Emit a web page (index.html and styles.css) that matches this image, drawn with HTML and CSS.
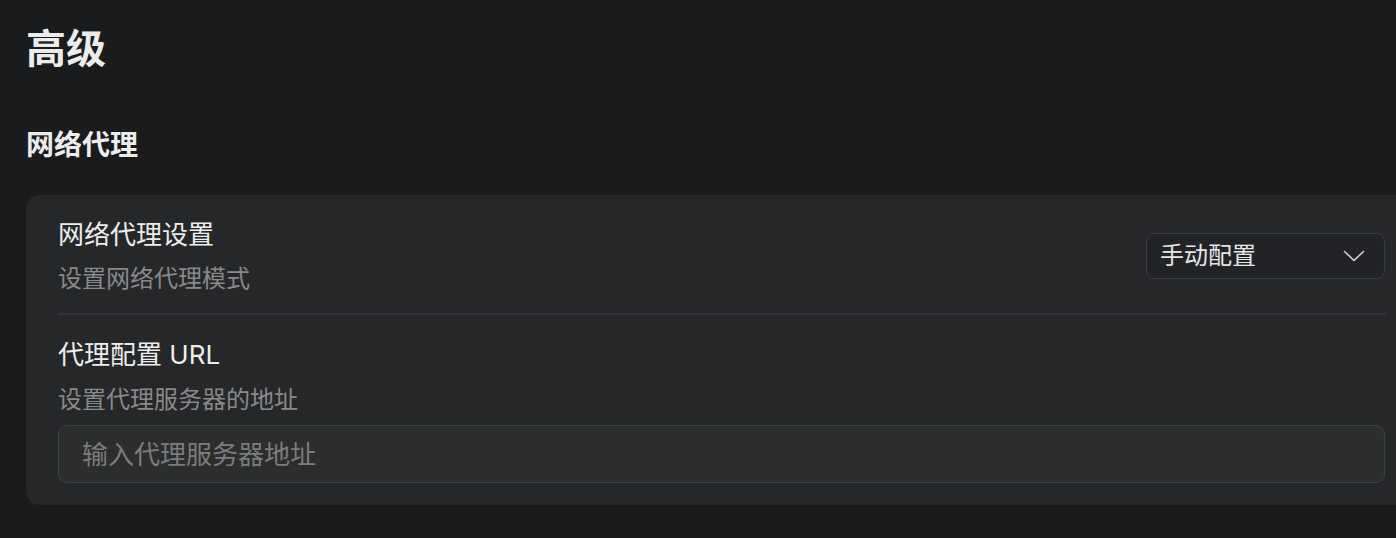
FILE: index.html
```html
<!DOCTYPE html>
<html lang="zh-CN">
<head>
<meta charset="utf-8">
<title>高级</title>
<link rel="stylesheet" href="styles.css">
</head>
<body>
<main class="page">
  <h1 class="page-title">高级</h1>
  <h2 class="section-title">网络代理</h2>
  <section class="card">
    <div class="row row-split">
      <div class="row-text">
        <div class="row-title">网络代理设置</div>
        <div class="row-desc">设置网络代理模式</div>
      </div>
      <button class="select" type="button">
        <span class="select-label">手动配置</span>
        <svg class="chevron" width="22" height="12" viewBox="0 0 22 12" aria-hidden="true">
          <path d="M1.5 1.5 L11 10.5 L20.5 1.5" fill="none" stroke="#cfd0d2" stroke-width="1.6" stroke-linecap="round" stroke-linejoin="round"/>
        </svg>
      </button>
    </div>
    <div class="divider"></div>
    <div class="row">
      <div class="row-title">代理配置 URL</div>
      <div class="row-desc row-desc-2">设置代理服务器的地址</div>
      <input class="text-input" type="text" placeholder="输入代理服务器地址">
    </div>
  </section>
</main>
</body>
</html>
```
FILE: styles.css
```css
html, body {
  margin: 0;
  padding: 0;
  background: #1a1b1d;
  overflow: hidden;
}
body {
  font-family: "Inter", "Noto Sans CJK SC", sans-serif;
  color: #e9e9ea;
  width: 1396px;
  height: 538px;
}
.page {
  padding: 23px 0 0 26px;
  width: 1392px;
}
.page-title {
  margin: 0;
  font-size: 40px;
  line-height: 52px;
  font-weight: 700;
  color: #ececed;
}
.section-title {
  margin: 52px 0 0 0;
  font-size: 28px;
  line-height: 36px;
  font-weight: 700;
  color: #ececed;
}
.card {
  margin-top: 32px;
  background: #262729;
  border-radius: 14px;
  padding: 22px 32px 22px 32px;
}
.row-split {
  display: flex;
  align-items: center;
  justify-content: space-between;
  padding-bottom: 18px;
}
.row-title {
  font-size: 26px;
  line-height: 36px;
  font-weight: 400;
  color: #ededee;
}
.row-desc {
  margin-top: 10px;
  font-size: 24px;
  line-height: 32px;
  color: #88898b;
}
.row-desc-2 {
  margin-top: 11px;
}
.select {
  display: flex;
  align-items: center;
  justify-content: space-between;
  width: 239px;
  height: 46px;
  margin-right: 1px;
  box-sizing: border-box;
  padding: 0 19px 0 13px;
  background: #212326;
  border: 1.5px solid #383b40;
  border-radius: 8px;
  font-family: "Inter", "Noto Sans CJK SC", sans-serif;
  font-size: 24px;
  color: #e6e6e7;
  cursor: pointer;
}
.select-label {
  line-height: 32px;
}
.chevron {
  display: block;
}
.divider {
  height: 2px;
  background: #333437;
}
.row + .divider + .row {
  padding-top: 22px;
}
.text-input {
  display: block;
  margin-top: 9px;
  width: calc(100% - 1px);
  height: 58px;
  box-sizing: border-box;
  padding: 0 23px;
  background: #2c2d2d;
  border: 1.5px solid #3b3f47;
  border-radius: 9px;
  font-family: "Inter", "Noto Sans CJK SC", sans-serif;
  font-size: 26px;
  color: #e6e6e7;
  outline: none;
}
.text-input::placeholder {
  color: #7b7c7d;
}
```
